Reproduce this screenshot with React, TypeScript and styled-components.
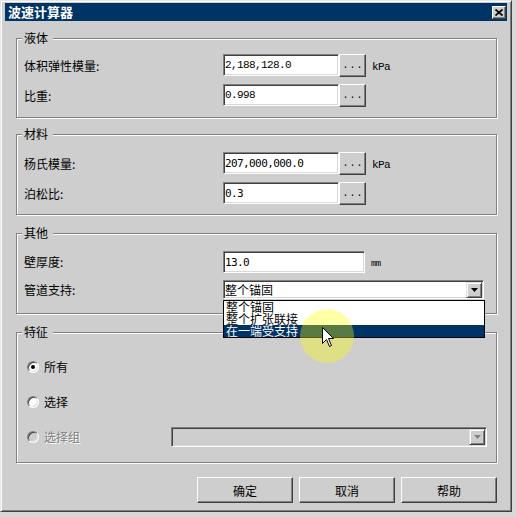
import React from "react";
import styled, { createGlobalStyle } from "styled-components";

const FACE = "#cecece";
const NAVY = "#003366";
const CJK = `"Noto Sans CJK SC", "Liberation Sans", sans-serif`;

const GlobalStyle = createGlobalStyle`
  html, body { margin: 0; padding: 0; background: #d8d8d8; }
  body { font-family: ${CJK}; font-size: 12px; color: #000; }
  #root { width: 516px; height: 517px; }
`;

const Dialog = styled.div`
  position: relative;
  box-sizing: border-box;
  width: 512px;
  height: 512px;
  background: ${FACE};
  border: 1px solid;
  border-color: #e6e6e6 #404040 #404040 #e6e6e6;
  box-shadow: inset 1px 1px 0 #ffffff, inset -1px -1px 0 #808080;
  padding: 2px 4px 0 4px;
  display: flex;
  flex-direction: column;
`;

const TitleBar = styled.div`
  flex: none;
  height: 18px;
  background: ${NAVY};
  display: flex;
  align-items: center;
  justify-content: space-between;
  padding: 0 1px 0 3px;
`;

const TitleText = styled.span`
  color: #fff;
  font-weight: 700;
  font-size: 13px;
  line-height: 18px;
`;

const CloseButton = styled.button`
  box-sizing: border-box;
  width: 14px;
  height: 13px;
  padding: 0;
  background: ${FACE};
  border: 1px solid;
  border-color: #fff #404040 #404040 #fff;
  box-shadow: inset -1px -1px 0 #808080;
  display: flex;
  align-items: center;
  justify-content: center;
`;

const Body = styled.div`
  display: flex;
  flex-direction: column;
  padding: 0 0 0 11px;
`;

const Group = styled.section<{ $h: number; $top: number }>`
  box-sizing: border-box;
  flex: none;
  width: 481px;
  height: ${(p) => p.$h}px;
  margin-top: ${(p) => p.$top}px;
  border: 1px solid #808080;
  box-shadow: inset 1px 1px 0 #fff, 1px 1px 0 #fff;
  padding: 0 0 0 7px;
  display: flex;
  flex-direction: column;
`;

const Legend = styled.h2`
  align-self: flex-start;
  margin: -9px 0 0 -2px;
  padding: 0 5px 0 2px;
  height: 16px;
  background: ${FACE};
  font-size: 12px;
  font-weight: 400;
  line-height: 16px;
`;

const Rows = styled.div<{ $top: number; $gap: number }>`
  display: flex;
  flex-direction: column;
  margin-top: ${(p) => p.$top}px;
  gap: ${(p) => p.$gap}px;
`;

const Row = styled.div<{ $h: number }>`
  display: flex;
  align-items: flex-start;
  height: ${(p) => p.$h}px;
`;

const Label = styled.span`
  flex: none;
  width: 199px;
  align-self: center;
  font-size: 12px;
  line-height: 16px;
`;

const TextBox = styled.input<{ $w: number; $mono?: boolean }>`
  box-sizing: border-box;
  flex: none;
  width: ${(p) => p.$w}px;
  height: 22px;
  margin: 0;
  padding: 0 0 0 1px;
  background: #fff;
  border: 1px solid;
  border-color: #808080 #fff #fff #808080;
  box-shadow: inset 1px 1px 0 #404040, inset -1px -1px 0 #d8d8d8;
  font-family: ${(p) => (p.$mono ? `"Liberation Mono", monospace` : `"DejaVu Sans Mono", monospace`)};
  font-size: 11px;
  letter-spacing: -0.6px;
  color: #000;
  outline: none;
`;

const DotsButton = styled.button`
  box-sizing: border-box;
  flex: none;
  width: 27px;
  height: 23px;
  margin: 0;
  padding: 0 0 0 1px;
  background: ${FACE};
  border: 1px solid;
  border-color: #fff #404040 #404040 #fff;
  box-shadow: inset -1px -1px 0 #808080;
  font-family: "Liberation Mono", monospace;
  font-size: 10px;
  letter-spacing: 1px;
  color: #000;
`;

const Unit = styled.span<{ $size: number }>`
  align-self: center;
  margin-left: 6px;
  font-family: "Liberation Mono", monospace;
  font-size: ${(p) => p.$size}px;
  letter-spacing: -0.6px;
  padding-top: 3px;
`;

const Combo = styled.div<{ $w: number; $h: number; $disabled?: boolean }>`
  position: relative;
  box-sizing: border-box;
  flex: none;
  width: ${(p) => p.$w}px;
  height: ${(p) => p.$h}px;
  background: ${(p) => (p.$disabled ? FACE : "#fff")};
  border: 1px solid;
  border-color: #808080 #fff #fff #808080;
  box-shadow: inset 1px 1px 0 #404040, inset -1px -1px 0 #d8d8d8;
  display: flex;
  align-items: flex-start;
  padding: 1px 1px 0 1px;
`;

const ComboText = styled.span`
  font-size: 12px;
  line-height: 16px;
`;

const ArrowButton = styled.span<{ $disabled?: boolean }>`
  box-sizing: border-box;
  width: 16px;
  height: 16px;
  margin-left: auto;
  background: ${FACE};
  border: 1px solid;
  border-color: #dfdfdf #404040 #404040 #dfdfdf;
  box-shadow: inset 1px 1px 0 #fff, inset -1px -1px 0 #808080;
  display: flex;
  align-items: center;
  justify-content: center;
`;

const DropList = styled.ul`
  position: absolute;
  left: -1px;
  top: calc(100% + 2px);
  z-index: 1;
  box-sizing: border-box;
  width: 262px;
  margin: 0;
  padding: 0;
  list-style: none;
  background: #fff;
  border: 1px solid #000;
`;

const DropItem = styled.li<{ $selected?: boolean }>`
  height: 12px;
  line-height: 12px;
  padding-left: 2px;
  font-size: 12px;
  white-space: nowrap;
  background: ${(p) => (p.$selected ? NAVY : "transparent")};
  color: ${(p) => (p.$selected ? "#fff" : "#000")};
`;

const RadioRow = styled.div`
  display: flex;
  align-items: center;
  height: 22px;
`;

const RadioCircle = styled.span<{ $checked?: boolean; $disabled?: boolean }>`
  box-sizing: border-box;
  flex: none;
  width: 12px;
  height: 12px;
  margin-left: 3px;
  border-radius: 50%;
  border: 1px solid;
  border-color: #808080 #fff #fff #808080;
  box-shadow: inset 1px 1px 0 #404040, inset -1px -1px 0 #dcdcdc;
  background: ${(p) => (p.$disabled ? FACE : "#fff")};
  display: flex;
  align-items: center;
  justify-content: center;
  &::after {
    content: "";
    display: ${(p) => (p.$checked ? "block" : "none")};
    width: 4px;
    height: 4px;
    border-radius: 50%;
    background: #000;
  }
`;

const RadioLabel = styled.span<{ $disabled?: boolean }>`
  margin-left: 5px;
  font-size: 12px;
  line-height: 16px;
  color: ${(p) => (p.$disabled ? "#808080" : "#000")};
  text-shadow: ${(p) => (p.$disabled ? "1px 1px 0 #fff" : "none")};
`;

const GroupCombo = styled(Combo)`
  margin-left: auto;
  margin-right: 9px;
`;

const ButtonRow = styled.div`
  display: flex;
  justify-content: flex-end;
  gap: 6px;
  width: 481px;
  margin-top: 14px;
`;

const PushButton = styled.button`
  box-sizing: border-box;
  width: 96px;
  height: 26px;
  padding: 0;
  background: ${FACE};
  border: 1px solid;
  border-color: #fff #404040 #404040 #fff;
  box-shadow: inset -1px -1px 0 #808080;
  font-family: ${CJK};
  font-size: 12px;
  color: #000;
`;

const ClickHalo = styled.div`
  position: absolute;
  left: 299px;
  top: 308px;
  width: 54px;
  height: 54px;
  border-radius: 50%;
  background: rgba(255, 255, 0, 0.35);
  pointer-events: none;
  z-index: 2;
`;

const Cursor = styled.svg`
  position: absolute;
  left: 321px;
  top: 326px;
  z-index: 3;
  pointer-events: none;
`;

const DownArrow = ({ color }: { color: string }) => (
  <svg width="7" height="4" viewBox="0 0 7 4">
    <polygon points="0,0 7,0 3.5,4" fill={color} />
  </svg>
);

export default function App() {
  return (
    <>
      <GlobalStyle />
      <Dialog>
        <TitleBar>
          <TitleText>波速计算器</TitleText>
          <CloseButton aria-label="关闭">
            <svg width="8" height="7" viewBox="0 0 8 7">
              <path d="M0.5 0.5 L7.5 6.5 M7.5 0.5 L0.5 6.5" stroke="#000" strokeWidth="1.7" />
            </svg>
          </CloseButton>
        </TitleBar>
        <Body>
          <Group $h={80} $top={17}>
            <Legend>液体</Legend>
            <Rows $top={8} $gap={7}>
              <Row $h={23}>
                <Label>体积弹性模量:</Label>
                <TextBox readOnly defaultValue="2,188,128.0" $w={116} $mono />
                <DotsButton>...</DotsButton>
                <Unit $size={11}>kPa</Unit>
              </Row>
              <Row $h={23}>
                <Label>比重:</Label>
                <TextBox readOnly defaultValue="0.998" $w={116} $mono />
                <DotsButton>...</DotsButton>
              </Row>
            </Rows>
          </Group>

          <Group $h={81} $top={16}>
            <Legend>材料</Legend>
            <Rows $top={10} $gap={7}>
              <Row $h={23}>
                <Label>杨氏模量:</Label>
                <TextBox readOnly defaultValue="207,000,000.0" $w={116} />
                <DotsButton>...</DotsButton>
                <Unit $size={11}>kPa</Unit>
              </Row>
              <Row $h={23}>
                <Label>泊松比:</Label>
                <TextBox readOnly defaultValue="0.3" $w={116} />
                <DotsButton>...</DotsButton>
              </Row>
            </Rows>
          </Group>

          <Group $h={81} $top={18}>
            <Legend>其他</Legend>
            <Rows $top={10} $gap={7}>
              <Row $h={22}>
                <Label>壁厚度:</Label>
                <TextBox readOnly defaultValue="13.0" $w={142} />
                <Unit $size={9}>mm</Unit>
              </Row>
              <Row $h={19}>
                <Label>管道支持:</Label>
                <Combo $w={261} $h={19}>
                  <ComboText>整个锚固</ComboText>
                  <ArrowButton>
                    <DownArrow color="#000" />
                  </ArrowButton>
                  <DropList>
                    <DropItem>整个锚固</DropItem>
                    <DropItem>整个扩张联接</DropItem>
                    <DropItem $selected>在一端受支持</DropItem>
                  </DropList>
                </Combo>
              </Row>
            </Rows>
          </Group>

          <Group $h={131} $top={18}>
            <Legend>特征</Legend>
            <Rows $top={16} $gap={13}>
              <RadioRow>
                <RadioCircle $checked />
                <RadioLabel>所有</RadioLabel>
              </RadioRow>
              <RadioRow>
                <RadioCircle />
                <RadioLabel>选择</RadioLabel>
              </RadioRow>
              <RadioRow>
                <RadioCircle $disabled />
                <RadioLabel $disabled>选择组</RadioLabel>
                <GroupCombo $w={316} $h={20} $disabled>
                  <ArrowButton $disabled>
                    <DownArrow color="#808080" />
                  </ArrowButton>
                </GroupCombo>
              </RadioRow>
            </Rows>
          </Group>

          <ButtonRow>
            <PushButton>确定</PushButton>
            <PushButton>取消</PushButton>
            <PushButton>帮助</PushButton>
          </ButtonRow>
        </Body>
        <ClickHalo />
        <Cursor width="13" height="21" viewBox="0 0 13 21">
          <path
            d="M0.5 0.5 L0.5 16.5 L4.5 12.5 L7.5 19.5 L9.5 18.5 L6.5 11.5 L11.5 11.5 Z"
            fill="#fff"
            stroke="#000"
            strokeWidth="1"
            strokeLinejoin="miter"
          />
        </Cursor>
      </Dialog>
    </>
  );
}
